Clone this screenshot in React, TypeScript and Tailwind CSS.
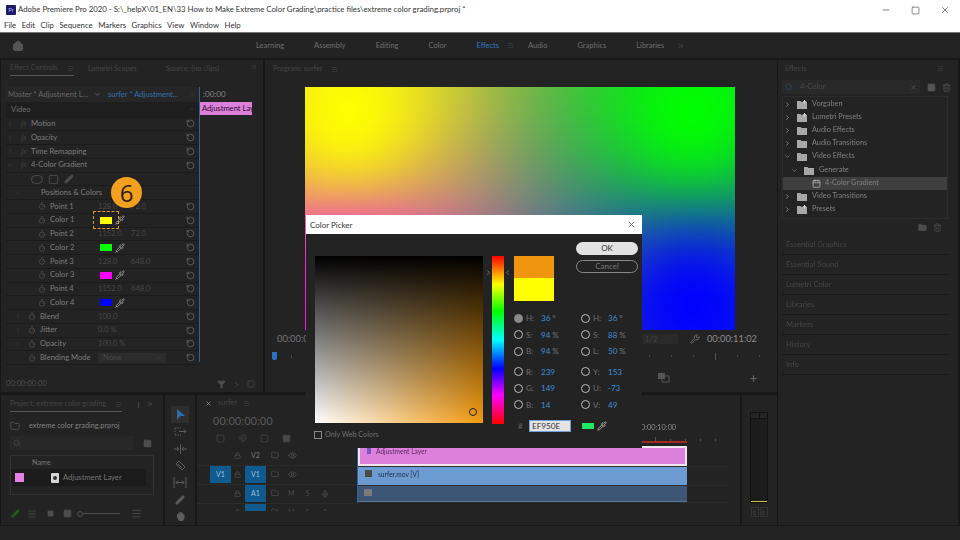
import { useEffect, useRef } from "react";
import { Calendar, ChevronDown, ChevronLeft, ChevronRight, ChevronsRight, Eye, Filter, Folder, Home, Lock, Magnet, Menu, Mic, Minus, Pen, Pipette, Plus, RotateCcw, Search, Square, Timer, Trash2, Wrench, X } from "lucide-react";

const WORKSPACES = ["Learning", "Assembly", "Editing", "Color", "Effects", "Audio", "Graphics", "Libraries"];
const MENUS = ["File", "Edit", "Clip", "Sequence", "Markers", "Graphics", "View", "Window", "Help"];

type Row = {
  label: string;
  pad: string;
  twirl?: "open" | "closed";
  fx?: boolean;
  watch?: boolean;
  values?: string[];
  color?: string;
  reset?: boolean;
};

const ROWS: Row[] = [
  { label: "Motion", pad: "", twirl: "closed", fx: true, reset: true },
  { label: "Opacity", pad: "", twirl: "closed", fx: true, reset: true },
  { label: "Time Remapping", pad: "", twirl: "closed", fx: true, reset: true },
  { label: "4-Color Gradient", pad: "", twirl: "open", fx: true, reset: true },
  { label: "", pad: "pl-[25px]" },
  { label: "Positions & Colors", pad: "pl-[8px]", twirl: "open" },
  { label: "Point 1", pad: "pl-[32px]", watch: true, values: ["128.0", "72.0"], reset: true },
  { label: "Color 1", pad: "pl-[32px]", watch: true, color: "bg-[#ffff00]", reset: true },
  { label: "Point 2", pad: "pl-[32px]", watch: true, values: ["1152.0", "72.0"], reset: true },
  { label: "Color 2", pad: "pl-[32px]", watch: true, color: "bg-[#00ff00]", reset: true },
  { label: "Point 3", pad: "pl-[32px]", watch: true, values: ["128.0", "648.0"], reset: true },
  { label: "Color 3", pad: "pl-[32px]", watch: true, color: "bg-[#ff00ff]", reset: true },
  { label: "Point 4", pad: "pl-[32px]", watch: true, values: ["1152.0", "648.0"], reset: true },
  { label: "Color 4", pad: "pl-[32px]", watch: true, color: "bg-[#0000ff]", reset: true },
  { label: "Blend", pad: "pl-[8px]", twirl: "closed", watch: true, values: ["100.0"], reset: true },
  { label: "Jitter", pad: "pl-[8px]", twirl: "closed", watch: true, values: ["0.0 %"], reset: true },
  { label: "Opacity", pad: "pl-[8px]", twirl: "closed", watch: true, values: ["100.0 %"], reset: true },
  { label: "Blending Mode", pad: "pl-[22px]", watch: true, reset: true },
];

// the four points and colours of the 4-Color Gradient effect, in a 10% inset
const GRADIENT_POINTS = [
  { x: 0.1, y: 0.1, c: [255, 255, 0] },
  { x: 0.9, y: 0.1, c: [0, 255, 0] },
  { x: 0.1, y: 0.9, c: [255, 0, 255] },
  { x: 0.9, y: 0.9, c: [0, 0, 255] },
];

function GradientFrame() {
  const ref = useRef<HTMLCanvasElement>(null);

  useEffect(() => {
    const ctx = ref.current?.getContext("2d");
    if (!ctx) return;
    const w = 430;
    const h = 243;
    const img = ctx.createImageData(w, h);
    for (let y = 0; y < h; y++) {
      for (let x = 0; x < w; x++) {
        let total = 0;
        const sum = [0, 0, 0];
        for (const p of GRADIENT_POINTS) {
          const dx = (x / w - p.x) * 16;
          const dy = (y / h - p.y) * 9;
          const weight = 1 / (dx * dx + dy * dy + 0.3);
          total += weight;
          sum[0] += p.c[0] * weight;
          sum[1] += p.c[1] * weight;
          sum[2] += p.c[2] * weight;
        }
        const i = (y * w + x) * 4;
        img.data[i] = sum[0] / total;
        img.data[i + 1] = sum[1] / total;
        img.data[i + 2] = sum[2] / total;
        img.data[i + 3] = 255;
      }
    }
    ctx.putImageData(img, 0, 0);
  }, []);

  return <canvas ref={ref} width={430} height={243} className="ml-[40px] mt-[9px] block w-[430px] h-[243px]" />;
}

function EffectRow({ row }: { row: Row }) {
  return (
    <div className="h-[13.76px] flex items-center border-b border-[#1b1b1b] text-[7.6px] text-[#7d7d7d]">
      <div className={`w-[92px] shrink-0 flex items-center ${row.pad}`}>
        {row.twirl === "closed" && <ChevronRight size={6} className="w-[8px] shrink-0 text-[#444]" />}
        {row.twirl === "open" && <ChevronDown size={6} className="w-[8px] shrink-0 text-[#444]" />}
        {row.fx && <span className="w-[17px] shrink-0 pl-[7px] italic font-['Liberation_Serif',serif] text-[#444]">fx</span>}
        {row.twirl && !row.fx && <span className={row.watch ? "w-[6px] shrink-0" : "w-[19px] shrink-0"} />}
        {row.watch && <Timer size={8} className="mr-[4px] shrink-0 text-[#565656]" />}
        <span className="whitespace-nowrap">{row.label}</span>
      </div>
      <div className="flex-1 flex items-center">
        {row.values && (
          <>
            <span className="w-[33px] whitespace-nowrap text-[#484848]">{row.values[0]}</span>
            {row.values[1] && <span className="whitespace-nowrap text-[#484848]">{row.values[1]}</span>}
          </>
        )}
        {row.color && (
          <>
            <span className={`ml-[2px] w-[12px] h-[7px] ${row.color}`} />
            <Pipette size={10} className="ml-[3px] text-[#a5a5a5]" />
          </>
        )}
        {row.label === "Blending Mode" && (
          <span className="w-[68px] h-[10px] flex items-center justify-between px-[5px] bg-[#2c2c2c] text-[#484848]">
            None <ChevronDown size={6} />
          </span>
        )}
      </div>
      {row.reset && <RotateCcw size={9} className="mr-[4px] shrink-0 text-[#6a6a6a]" />}
    </div>
  );
}

function PanelTab({ label, active, menu, className }: { label: string; active?: boolean; menu?: boolean; className?: string }) {
  return (
    <div className={`h-[12px] pb-[2px] flex items-center gap-[9px] whitespace-nowrap text-[7.3px] text-[#444] ${active ? "border-b border-[#555]" : ""} ${className ?? ""}`}>
      {label}
      {menu && <Menu size={7} className="text-[#444]" />}
    </div>
  );
}

function EffectControls() {
  return (
    <section className="w-[262px] shrink-0 bg-[#232323] flex flex-col relative">
      <div className="h-[18px] flex items-end pb-[2px]">
        <PanelTab label="Effect Controls" active menu className="ml-[9px]" />
        <PanelTab label="Lumetri Scopes" className="ml-[14px]" />
        <PanelTab label="Source: (no clips)" className="ml-[29px]" />
        <ChevronsRight size={8} className="ml-auto mr-[5px] mb-[5px] text-[#4a4a4a]" />
      </div>
      <div className="flex flex-1 pl-[5px] pr-[11px] pt-[9px] min-h-0">
        <div className="w-[193px] shrink-0 flex flex-col">
          <div className="h-[15px] flex items-center bg-[#262626] text-[7.6px]">
            <span className="w-[88px] pl-[2px] whitespace-nowrap text-[#666]">Master * Adjustment L...</span>
            <ChevronDown size={7} className="text-[#888]" />
            <span className="ml-[7px] whitespace-nowrap text-[#2f71b5]">surfer * Adjustment...</span>
            <ChevronRight size={6} className="ml-auto mr-[4px] text-[#444]" />
          </div>
          <div className="h-[15.5px] flex items-center justify-between bg-[#1e1e1e] pl-[5px] pr-[4px] text-[7.6px] text-[#707070] border-b border-[#1b1b1b]">
            Video <ChevronDown size={6} className="rotate-180 text-[#444]" />
          </div>
          {ROWS.map((row, i) => (
            <div key={i} className="relative">
              <EffectRow row={row} />
              {i === 4 && (
                <div className="absolute left-[25px] top-[1px] flex items-center gap-[5px] text-[#4d4d4d]">
                  <span className="w-[12px] h-[9px] rounded-full border border-[#4d4d4d]" />
                  <Square size={11} />
                  <Pen size={10} fill="#4d4d4d" />
                </div>
              )}
            </div>
          ))}
        </div>
        <div className="flex-1 min-w-0 overflow-hidden border-l border-[#2b63a0] h-[275px] flex flex-col">
          <div className="h-[15px] pl-[3px] text-[8px] leading-[15px] text-[#8a8a8a] whitespace-nowrap">:00:00</div>
          <div className="h-[13px] bg-[#dd80dc] pl-[2px] text-[7.6px] leading-[13px] text-[#2a1030] overflow-hidden whitespace-nowrap">Adjustment Layer</div>
        </div>
      </div>
      <div className="h-[14px] mb-[1px] flex items-center pl-[5px] pr-[8px] text-[7.6px] text-[#4d4d4d]">
        00:00:00:00
        <Filter size={9} className="ml-auto" fill="#4d4d4d" />
        <ChevronRight size={9} className="ml-[6px]" />
        <Square size={8} className="ml-[6px]" />
      </div>
      <div className="absolute left-[92px] top-[151px] w-[26px] h-[18px] border-[1.5px] border-dashed border-[#e69a26] rounded-[1px]" />
      <div className="absolute left-[110px] top-[117px] w-[31px] h-[31px] rounded-full bg-[#f2a01e] flex items-center justify-center text-[24px] text-[#2a2015] font-['Open_Sans',sans-serif]">6</div>
    </section>
  );
}

function ProgramPanel() {
  return (
    <section className="flex-1 bg-[#232323] flex flex-col">
      <div className="h-[18px] flex items-end pl-[8px] pb-[2px]">
        <PanelTab label="Program: surfer" menu />
      </div>
      <GradientFrame />
      <div className="h-[18px] flex items-center pl-[12px] text-[9.3px] text-[#777]">
        00:00:00:00
        <span className="ml-auto w-[36px] h-[10px] bg-[#2a2a2a] px-[3px] text-[7.6px] leading-[10px] text-[#444]">1/2</span>
        <Wrench size={10} className="ml-[12px] text-[#777]" />
        <span className="ml-[7px] mr-[20px] text-[9.3px] text-[#8d8d8d]">00:00:11:02</span>
      </div>
      <div className="h-[16px] flex items-center pl-[7px] pr-[17px]">
        <span className="w-[5px] h-[8px] rounded-b-[2px] bg-[#2b72c0]" />
        <span className="ml-[14px] w-[1px] h-[3px] bg-[#444]" />
        <div className="ml-auto flex items-center gap-[21px]">
          {[0, 1, 2, 3, 4, 5].map((i) => (
            <span key={i} className={`w-[1px] ${i === 3 ? "h-[7px] bg-[#555]" : "h-[2px] bg-[#444]"}`} />
          ))}
        </div>
      </div>
      <div className="flex-1 flex items-center justify-end pr-[19px] text-[#666]">
        <svg width="12" height="10" viewBox="0 0 12 10" className="mr-[79px]">
          <rect x="0" y="0" width="7" height="6" fill="#555" />
          <rect x="4" y="3" width="7" height="6" fill="none" stroke="#555" />
        </svg>
        <Plus size={9} strokeWidth={3} />
      </div>
    </section>
  );
}

function ProjectPanel() {
  return (
    <section className="w-[162px] shrink-0 bg-[#232323] flex flex-col px-[9px]">
      <div className="h-[19px] flex items-end pb-[2px]">
        <PanelTab label="Project: extreme color grading" active menu />
        <span className="ml-[16px] mb-[4px] w-[1px] h-[6px] bg-[#444]" />
        <ChevronsRight size={8} className="ml-auto mb-[4px] text-[#555]" />
      </div>
      <div className="h-[20px] mt-[2px] flex items-center gap-[9px] text-[7.3px] text-[#808080] whitespace-nowrap">
        <Folder size={10} className="text-[#555]" />
        extreme color grading.prproj
      </div>
      <div className="h-[14px] flex items-center gap-[10px]">
        <div className="w-[123px] h-[14px] bg-[#282828] pl-[3px] flex items-center">
          <Search size={8} className="text-[#4d4d4d]" />
        </div>
        <Square size={9} className="text-[#4d4d4d]" fill="#4d4d4d" />
      </div>
      <div className="h-[40px] mt-[5px] border border-[#333] flex flex-col">
        <div className="h-[13px] pl-[21px] text-[7.3px] leading-[13px] text-[#777]">Name</div>
        <div className="h-[17px] w-[135px] bg-[#1b1b1b] flex items-center pl-[4px] text-[7.6px] text-[#767676]">
          <span className="w-[9px] h-[9px] bg-[#e680e6]" />
          <span className="ml-[27px] w-[8px] h-[10px] bg-[#d5d5d5] rounded-[1px] flex items-center justify-center">
            <span className="w-[4px] h-[4px] rounded-full bg-[#333]" />
          </span>
          <span className="ml-[4px] whitespace-nowrap">Adjustment Layer</span>
        </div>
      </div>
      <div className="mt-[13px] flex items-center text-[#4d4d4d]">
        <Pen size={9} className="ml-[1px] text-[#1f5f1f]" fill="#1f5f1f" />
        <Menu size={10} className="ml-[7px]" />
        <Square size={7} className="ml-[10px]" fill="#4d4d4d" />
        <Square size={9} className="ml-[9px]" fill="#4d4d4d" />
        <span className="ml-[5px] w-[6px] h-[6px] rounded-full border border-[#555]" />
        <span className="w-[37px] h-[1px] bg-[#4d4d4d]" />
        <Menu size={11} className="ml-[11px]" />
      </div>
    </section>
  );
}

function ToolsPanel() {
  const stroke = "#5c5c5c";
  return (
    <section className="w-[30px] shrink-0 bg-[#232323] flex flex-col items-center pt-[11px] overflow-hidden">
      <div className="w-[18px] h-[18px] bg-[#2e2e2e] flex items-center justify-center">
        <svg width="9" height="11" viewBox="0 0 9 11"><path d="M1 0 L9 7 L4.5 7 L1 11 Z" fill="#2f6cae" /></svg>
      </div>
      <div className="h-[17.7px] flex items-center">
        <svg width="13" height="9" viewBox="0 0 13 9" fill="none" stroke={stroke}><path d="M1 1h6M1 8h6M1 1v7" strokeDasharray="1.5 1" /><path d="M5 4.5h7M10 2.5l2 2-2 2" /></svg>
      </div>
      <div className="h-[17.7px] flex items-center">
        <svg width="13" height="10" viewBox="0 0 13 10" fill="none" stroke={stroke}><path d="M6.5 0v10M0 5h5M8 5h5" /><path d="M3 3l2 2-2 2M10 3l-2 2 2 2" /></svg>
      </div>
      <div className="h-[17.7px] flex items-center">
        <svg width="11" height="11" viewBox="0 0 11 11"><path d="M1 4 L4 1 L10 7 L7 10 Z" fill="none" stroke={stroke} /><path d="M3 4 L7 8" stroke={stroke} /></svg>
      </div>
      <div className="h-[17.7px] flex items-center">
        <svg width="14" height="11" viewBox="0 0 14 11" fill="none" stroke={stroke}><path d="M1 0v11M13 0v11M3 5.5h8M5 3.5l-2 2 2 2M9 3.5l2 2-2 2" /></svg>
      </div>
      <div className="h-[17.7px] flex items-center">
        <Pen size={10} className="text-[#5c5c5c]" fill="#5c5c5c" />
      </div>
      <div className="h-[17.7px] flex items-center">
        <svg width="11" height="11" viewBox="0 0 11 11"><path d="M2 6 V3 H3.5 V1.5 H5 V1 H6.5 V2 H8 V3.5 H9.5 V7 L8 10 H4 Z" fill="#5c5c5c" /></svg>
      </div>
    </section>
  );
}

function TrackHead({ source, target, last, audio }: { source?: string; target: string; last?: boolean; audio?: boolean }) {
  return (
    <div className={`flex items-start border-b border-[#2c2c2c] text-[7px] text-[#7a7a7a] ${last ? "h-[7px] overflow-hidden border-b-0" : "h-[19px]"}`}>
      <span className={`w-[21px] ml-[13px] h-[17px] flex items-center justify-center ${source ? "bg-[#0f5a8f] text-[#9bc0dc]" : ""}`}>{source}</span>
      <Lock size={7} className="ml-[3px] mt-[5px] text-[#565656]" />
      <span className={`w-[21px] ml-[4px] h-[17px] flex items-center justify-center ${target === "V2" ? "" : "bg-[#0f5a8f] text-[#9bc0dc]"}`}>{last ? "" : target}</span>
      <Folder size={8} className="ml-[5px] mt-[4px] text-[#565656]" />
      {audio ? (
        <div className="h-[17px] flex items-center">
          <span className="ml-[9px] text-[#4a4a4a]">M</span>
          <span className="ml-[11px] text-[#4a4a4a]">S</span>
          <Mic size={8} className="ml-[12px] text-[#565656]" />
        </div>
      ) : (
        <Eye size={9} className="ml-[9px] mt-[4px] text-[#565656]" />
      )}
    </div>
  );
}

function TimelinePanel() {
  return (
    <section className="w-[543px] shrink-0 bg-[#232323] flex">
      <div className="w-[160px] shrink-0 flex flex-col">
        <div className="h-[17px] flex items-center pl-[8px] gap-[6px] text-[7.3px] text-[#444]">
          <X size={7} className="text-[#aaa]" />
          surfer
          <Menu size={7} />
        </div>
        <div className="h-[19px] pl-[16px] flex items-center text-[10.5px] tracking-[0.3px] text-[#5c5c5c]">00:00:00:00</div>
        <div className="h-[15px] pl-[19px] flex items-center gap-[13px] text-[#484848]">
          <Square size={9} />
          <Magnet size={9} />
          <Square size={9} />
          <Square size={9} fill="#484848" />
        </div>
        <div className="h-[1px]" />
        <TrackHead target="V2" />
        <TrackHead source="V1" target="V1" />
        <TrackHead target="A1" audio />
        <TrackHead target="A2" audio last />
      </div>
      <div className="flex-1 flex flex-col pr-[13px]">
        <div className="h-[42px] pl-[284px] flex flex-col justify-end text-[7.3px] text-[#909090] whitespace-nowrap">
          <span className="mb-[3px]">0:00:10:00</span>
        </div>
        <div className="h-[4px] ml-[298px] flex gap-[14px]">
          {[0, 1, 2, 3, 4].map((i) => (
            <span key={i} className={`w-[1px] bg-[#555] ${i === 0 ? "h-[4px]" : "h-[2px] mt-[2px]"}`} />
          ))}
        </div>
        <div className="h-[2px] ml-[283px] w-[47px] bg-[#a32a22] mr-auto" />
        <div className="h-[3px]" />
        <div className="border-l border-[#2b63a0]">
          <div className="h-[21px] flex border-b border-[#2c2c2c]">
            <div className="w-[329px] h-[20px] bg-[#dd80dc] border-2 border-[#efe6ee] pl-[7px] flex items-start gap-[5px] text-[6.6px] leading-[7px] text-[#5b2a63] whitespace-nowrap">
              <span className="w-[4px] h-[6px] bg-[#7a55c0]" />
              Adjustment Layer
            </div>
          </div>
          <div className="h-[19px] flex border-b border-[#2c2c2c]">
            <div className="w-[329px] h-[18px] bg-[#6c9bd2] pl-[7px] pt-[3px] flex items-start gap-[6px] text-[6.6px] leading-[8px] text-[#20304a] whitespace-nowrap">
              <span className="w-[7px] h-[7px] bg-[#4a4a4a]" />
              surfer.mov [V]
            </div>
          </div>
          <div className="h-[17px] flex border-b border-[#2c2c2c]">
            <div className="w-[329px] h-[16px] bg-[#3d5675] border-b border-[#5b7594] pl-[6px] pt-[3px]">
              <span className="block w-[8px] h-[7px] bg-[#7b7b7b]" />
            </div>
          </div>
        </div>
      </div>
    </section>
  );
}

function MeterPanel() {
  return (
    <section className="flex-1 bg-[#232323] flex flex-col items-center pt-[17px] pl-[1px] pr-[2px]">
      <div className="w-[18px] h-[91px] bg-[#1c1c1c] border border-[#111] flex flex-col justify-between">
        <div className="h-[6px] bg-[#262626] border-b border-[#111] flex justify-center">
          <span className="w-[1px] bg-[#111]" />
        </div>
        <div className="h-[1px] bg-[#c4c43a]" />
      </div>
      <div className="mt-[4px] flex gap-[1px] text-[6px] text-[#4a4a4a]">
        <span className="w-[8px] h-[10px] border border-[#333] text-center">S</span>
        <span className="w-[8px] h-[10px] border border-[#333] text-center">S</span>
      </div>
    </section>
  );
}

function FolderIcon({ preset }: { preset?: boolean }) {
  return (
    <svg width="10" height="9" viewBox="0 0 10 9" className="shrink-0 ml-[6px] mr-[5px]">
      <path d="M0 1h3.5l1 1H10v7H0z" fill="#a8a8a8" />
      {preset && <path d="M7.5 0v3.5M5.8 1.7h3.4" stroke="#dcdcdc" strokeWidth="1" />}
    </svg>
  );
}

function EffectsItem({ label, pad, open, selected, preset, fx }: { label: string; pad: string; open?: boolean; selected?: boolean; preset?: boolean; fx?: boolean }) {
  return (
    <div className={`h-[13.1px] flex items-center text-[7.3px] text-[#808080] ${pad} ${selected ? "bg-[#3f3f3f]" : ""}`}>
      {!fx && (open ? <ChevronDown size={7} className="shrink-0 text-[#9a9a9a]" /> : <ChevronRight size={7} className="shrink-0 text-[#bdbdbd]" />)}
      {fx ? <Calendar size={9} className="shrink-0 mr-[4px] text-[#bbb]" /> : <FolderIcon preset={preset} />}
      <span className="whitespace-nowrap">{label}</span>
    </div>
  );
}

function EffectsPanel() {
  const stacked = ["Essential Graphics", "Essential Sound", "Lumetri Color", "Libraries", "Markers", "History", "Info"];
  return (
    <aside className="w-[180px] shrink-0 bg-[#232323] flex flex-col px-[4px]">
      <div className="h-[18px] flex items-end justify-between pl-[3px] pr-[10px] pb-[2px]">
        <PanelTab label="Effects" />
        <Menu size={7} className="mb-[4px] text-[#444]" />
      </div>
      <div className="mt-[2px] h-[14px] flex items-center text-[#555]">
        <div className="w-[138px] h-[14px] bg-[#292929] flex items-center pl-[3px] text-[7.6px] text-[#4a4a4a]">
          <Search size={8} className="mr-[7px] text-[#25507a]" />
          4-Color
          <X size={7} className="ml-auto mr-[3px] text-[#666]" />
        </div>
        <Square size={9} fill="#555" className="ml-[7px]" />
        <Trash2 size={9} className="ml-[6px]" />
      </div>
      <div className="mt-[2px] mr-[6px] h-[123px] border border-[#2c2c2c] pt-[1px] flex flex-col">
        <EffectsItem label="Vorgaben" pad="pl-[1px]" preset />
        <EffectsItem label="Lumetri Presets" pad="pl-[1px]" preset />
        <EffectsItem label="Audio Effects" pad="pl-[1px]" />
        <EffectsItem label="Audio Transitions" pad="pl-[1px]" />
        <EffectsItem label="Video Effects" pad="pl-[1px]" open />
        <EffectsItem label="Generate" pad="pl-[8px]" open />
        <EffectsItem label="4-Color Gradient" pad="pl-[29px]" selected fx />
        <EffectsItem label="Video Transitions" pad="pl-[1px]" />
        <EffectsItem label="Presets" pad="pl-[1px]" preset />
      </div>
      <div className="h-[16px] flex items-center justify-end gap-[6px] pr-[12px] text-[#4d4d4d]">
        <Folder size={9} fill="#4d4d4d" />
        <Trash2 size={9} />
      </div>
      <div className="mr-[4px] flex flex-col">
        {stacked.map((name) => (
          <div key={name} className="h-[20px] pl-[4px] flex items-center text-[7.6px] text-[#464646] border-b border-[#191919]">
            {name}
          </div>
        ))}
      </div>
    </aside>
  );
}

function Radio({ label, value, unit, filled }: { label: string; value: string; unit?: string; filled?: boolean }) {
  return (
    <div className="h-[16.6px] flex items-center text-[8px]">
      <span className={`w-[9px] h-[9px] rounded-full border-[1.5px] ${filled ? "bg-[#8a8a8a] border-[#8a8a8a]" : "border-[#bdbdbd]"}`} />
      <span className="ml-[3px] w-[15px] text-[#6f6f6f]">{label}</span>
      <span className="text-[#3d8ed8]">{value}</span>
      {unit && <span className="ml-[2px] text-[#777]">{unit}</span>}
    </div>
  );
}

function ColorPicker() {
  return (
    <div className="absolute left-[306px] top-[215px] w-[336px] h-[233px] bg-[#232323] flex flex-col">
      <div className="h-[19px] shrink-0 bg-white flex items-center justify-between pl-[4px] pr-[6px] text-[8px] text-[#333]">
        Color Picker
        <X size={9} className="text-[#666]" />
      </div>
      <div className="flex flex-1 pl-[9px] pt-[8px]">
        <div className="flex flex-col">
          <div className="flex mt-[14px]">
            <div className="relative w-[168px] h-[167px] bg-[linear-gradient(180deg,#000000,transparent),linear-gradient(90deg,#ffffff,#f39a10)]">
              <span className="absolute left-[154px] top-[152px] w-[8px] h-[8px] rounded-full border border-[#222]" />
            </div>
            <div className="relative ml-[9px] w-[12px] h-[168px] bg-[linear-gradient(180deg,#ff0000,#ffff00_17%,#00ff00_33%,#00ffff_50%,#0000ff_67%,#ff00ff_83%,#ff0000)]">
              <ChevronRight size={7} className="absolute left-[-7px] top-[13px] text-[#aaa]" />
              <ChevronLeft size={7} className="absolute left-[12px] top-[13px] text-[#aaa]" />
            </div>
          </div>
          <div className="mt-[6px] -ml-[1px] flex items-center gap-[3px] text-[7.2px] text-[#6f6f6f]">
            <span className="w-[8px] h-[8px] border border-[#888]" />
            Only Web Colors
          </div>
        </div>
        <div className="ml-[10px] w-[124px] flex flex-col">
          <div className="h-[58px] flex justify-between">
            <div className="mt-[14px] w-[40px] h-[45px] flex flex-col">
              <div className="h-[22px] bg-[#ef950e]" />
              <div className="h-[23px] bg-[#ffff00]" />
            </div>
            <div className="w-[62px] flex flex-col gap-[5px] text-[8px]">
              <div className="h-[13px] rounded-full bg-[#e2e2e2] text-center leading-[13px] text-[#333]">OK</div>
              <div className="h-[13px] rounded-full border border-[#888] text-center leading-[11px] text-[#777]">Cancel</div>
            </div>
          </div>
          <div className="mt-[10px] grid grid-cols-[67px_57px]">
            <Radio label="H:" value="36" unit="°" filled />
            <Radio label="H:" value="36" unit="°" />
            <Radio label="S:" value="94" unit="%" />
            <Radio label="S:" value="88" unit="%" />
            <Radio label="B:" value="94" unit="%" />
            <Radio label="L:" value="50" unit="%" />
            <div className="col-span-2 h-[3.6px]" />
            <Radio label="R:" value="239" />
            <Radio label="Y:" value="153" />
            <Radio label="G:" value="149" />
            <Radio label="U:" value="-73" />
            <Radio label="B:" value="14" />
            <Radio label="V:" value="49" />
          </div>
          <div className="mt-[6px] h-[14px] flex items-center text-[8px] text-[#666]">
            <span className="ml-[4px] w-[11px]">#</span>
            <span className="w-[42px] h-[12px] bg-[#e4e4e4] border border-[#6f9fd8] pl-[2px] text-[8.2px] leading-[10px] text-[#333]">EF950E</span>
            <span className="ml-[11px] w-[12px] h-[6px] bg-[#1ee860]" />
            <Pipette size={10} className="ml-[3px] text-[#bbb]" />
          </div>
        </div>
      </div>
    </div>
  );
}

export default function App() {
  return (
    <div className="relative w-[960px] h-[540px] overflow-hidden bg-[#171717] flex flex-col font-['Lato',sans-serif]">
      <header className="h-[20px] shrink-0 bg-white flex items-center pl-[6px] text-[#333]">
        <span className="w-[10px] h-[10px] rounded-[1px] bg-[#1b1b6a] text-center text-[6px] leading-[10px] text-[#a7a7f5]">Pr</span>
        <span className="ml-[2px] text-[7.8px] whitespace-nowrap">Adobe Premiere Pro 2020 - S:\_helpX\01_EN\33 How to Make Extreme Color Grading\practice files\extreme color grading.prproj *</span>
        <div className="ml-auto mr-[10px] flex items-center gap-[20px] text-[#666]">
          <Minus size={10} />
          <Square size={9} />
          <X size={10} />
        </div>
      </header>
      <nav className="h-[12px] shrink-0 bg-white flex items-center gap-[5.5px] pl-[4px] text-[7.8px] text-[#333]">
        {MENUS.map((m) => (
          <span key={m}>{m}</span>
        ))}
      </nav>
      <div className="h-[28px] shrink-0 border-t border-[#777] bg-[#232323] border-b-2 border-b-[#191919] flex items-center">
        <Home size={12} fill="#555" className="ml-[11px] w-[14px] text-[#555]" />
        <div className="ml-[231px] flex items-center gap-[30px] text-[7.5px] text-[#6f6f6f]">
          {WORKSPACES.map((w) => (
            <span key={w} className={w === "Effects" ? "flex items-center gap-[8px] text-[#2f78c4] -mr-[16px]" : ""}>
              {w}
              {w === "Effects" && <Menu size={7} className="text-[#254a70]" />}
            </span>
          ))}
          <ChevronsRight size={8} className="-ml-[17px] text-[#555]" />
        </div>
      </div>
      <main className="flex-1 flex gap-[1px] px-[1px] min-h-0">
        <div className="w-[776px] shrink-0 flex flex-col gap-[3px]">
          <div className="h-[332px] shrink-0 flex gap-[2px]">
            <EffectControls />
            <ProgramPanel />
          </div>
          <div className="flex-1 flex gap-[2px] min-h-0">
            <ProjectPanel />
            <ToolsPanel />
            <TimelinePanel />
            <MeterPanel />
          </div>
        </div>
        <EffectsPanel />
      </main>
      <footer className="h-[14px] shrink-0 mt-[1px] bg-[#232323]" />
      <ColorPicker />
    </div>
  );
}
